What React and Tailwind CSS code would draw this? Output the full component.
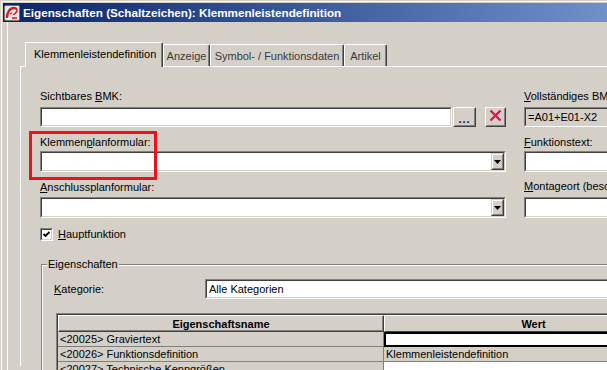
import React from 'react';

const TitleIcon = () => (
  <svg width="16" height="16" viewBox="0 0 16 16" className="ml-px shrink-0">
    <rect x="0.5" y="0.5" width="15" height="15" rx="1.5" fill="#e8e8e8" stroke="#6f6f6f" />
    <path d="M3 13 C3 7 6 3 10 3 C13 3 13.5 6 11 8 C9 9.5 7 9 6.5 8" fill="none" stroke="#d81c24" strokeWidth="2.4" />
    <path d="M4 14 L12 5" stroke="#ffffff" strokeWidth="1.2" />
    <path d="M8 13 L13 13" stroke="#d81c24" strokeWidth="1.6" />
  </svg>
);

// sunken text box (win2k style)
const Field = ({ className = "", inner = "bg-white", children }) => (
  <div className={`${className} border border-t-[#808080] border-l-[#808080] border-r-white border-b-white`}>
    <div className={`h-full flex items-center pl-[2px] whitespace-nowrap border border-t-[#404040] border-l-[#404040] border-r-[#d4d0c8] border-b-[#d4d0c8] ${inner}`}>
      {children}
    </div>
  </div>
);

const Raised = ({ className = "", children }) => (
  <div className={`${className} border border-t-white border-l-white border-r-[#404040] border-b-[#404040] bg-[#d4d0c8]`}>
    <div className="h-full flex items-center justify-center border border-t-[#d4d0c8] border-l-[#d4d0c8] border-r-[#808080] border-b-[#808080]">
      {children}
    </div>
  </div>
);

const Combo = ({ className = "" }) => (
  <div className={`${className} h-[21px] border border-t-[#808080] border-l-[#808080] border-r-white border-b-white`}>
    <div className="h-full flex justify-end bg-white border border-t-[#404040] border-l-[#404040] border-r-[#d4d0c8] border-b-[#d4d0c8]">
      <div className="w-[13px] h-full border border-t-[#d4d0c8] border-l-[#d4d0c8] border-r-[#404040] border-b-[#404040] bg-[#d4d0c8]">
        <div className="h-full flex items-center justify-center border border-t-white border-l-white border-r-[#808080] border-b-[#808080]">
          <svg width="7" height="4" viewBox="0 0 7 4">
            <path d="M0 0 H7 L3.5 4 Z" fill="#000" />
          </svg>
        </div>
      </div>
    </div>
  </div>
);

const tabs = [
  { label: "Anzeige", w: "w-[47px]" },
  { label: "Symbol- / Funktionsdaten", w: "w-[134px]" },
  { label: "Artikel", w: "w-[43px]" },
];

const rows = [
  { name: "<20025> Graviertext", value: "", edit: true },
  { name: "<20026> Funktionsdefinition", value: "Klemmenleistendefinition", gray: true },
  { name: "<20027> Technische Kenngrößen", value: "" },
];

export default function App() {
  return (
    <div className="w-[607px] h-[370px] overflow-hidden bg-[#d4d0c8] pt-[3px] pl-[3px] shadow-[inset_1px_1px_0_#d4d0c8,inset_2px_2px_0_#ffffff] font-['Liberation_Sans',Arial,sans-serif] text-[11px] leading-[14px] text-black">
      {/* title bar */}
      <div className="h-[19px] flex items-center bg-linear-to-r from-[#0a246a] to-[#7090cc]">
        <TitleIcon />
        <span className="ml-[3px] text-white text-[11.7px] font-bold whitespace-nowrap">
          Eigenschaften (Schaltzeichen): Klemmenleistendefinition
        </span>
      </div>

      <div className="ml-[4px] h-[348px] border-l border-white pl-[12px] pt-[20px]">
        {/* tabs */}
        <div className="flex items-end h-[24px] pl-[5px]">
          <div className="relative z-10 -mb-px w-[138px] h-[25px] pt-[4px] pl-[8px] bg-[#d4d0c8] rounded-t-[2px] border-l border-t border-white border-r border-r-[#404040] shadow-[inset_-1px_0_0_#808080] whitespace-nowrap">
            Klemmenleistendefinition
          </div>
          {tabs.map((t) => (
            <div
              key={t.label}
              className={`${t.w} h-[22px] pt-[4px] text-center text-[#3a3a3a] rounded-t-[2px] border-l border-t border-white border-r border-r-[#404040] shadow-[inset_-1px_0_0_#808080] whitespace-nowrap`}
            >
              {t.label}
            </div>
          ))}
        </div>

        {/* tab panel */}
        <div className="relative h-[300px] border-t border-l border-white pl-[19px] pt-[22px]">
          <div className="flex">
            <div className="w-[466px] shrink-0 flex flex-col">
              <div className="whitespace-nowrap">Sichtbares <u>B</u>MK:</div>
              <div className="mt-[4px] flex">
                <Field className="w-[412px] h-[20px]" />
                <Raised className="ml-px w-[23px] h-[20px]">
                  <span className="font-bold tracking-[1px] leading-none pt-[4px]">...</span>
                </Raised>
                <Raised className="ml-[9px] w-[21px] h-[20px]">
                  <svg width="13" height="13" viewBox="0 0 13 13" className="-mt-[3px]">
                    <path d="M1.5 1.5 L11.5 11.5 M11.5 1.5 L1.5 11.5" stroke="#e3144a" strokeWidth="2.4" />
                  </svg>
                </Raised>
              </div>

              <div className="mt-[8px] whitespace-nowrap">Klemmen<u>p</u>lanformular:</div>
              <Combo className="mt-[2px]" />

              <div className="mt-[8px] whitespace-nowrap"><u>A</u>nschlussplanformular:</div>
              <Combo className="mt-[3px]" />

              <div className="mt-[9px] flex items-center">
                <div className="w-[13px] h-[13px] border border-t-[#808080] border-l-[#808080] border-r-white border-b-white">
                  <div className="h-full bg-white border border-t-[#404040] border-l-[#404040] border-r-[#d4d0c8] border-b-[#d4d0c8] flex items-center justify-center">
                    <svg width="7" height="7" viewBox="0 0 7 7">
                      <path d="M0.5 3 L2.5 5 L6.5 1" fill="none" stroke="#000" strokeWidth="1.8" />
                    </svg>
                  </div>
                </div>
                <span className="ml-[5px]"><u>H</u>auptfunktion</span>
              </div>
            </div>

            <div className="ml-[18px] w-[200px] shrink-0 flex flex-col">
              <div className="whitespace-nowrap"><u>V</u>ollständiges BMK:</div>
              <Field className="mt-[4px] h-[20px]" inner="bg-[#d4d0c8]">=A01+E01-X2</Field>
              <div className="mt-[8px] whitespace-nowrap"><u>F</u>unktionstext:</div>
              <Field className="mt-[2px] h-[21px]" />
              <div className="mt-[7px] whitespace-nowrap"><u>M</u>ontageort (besonders):</div>
              <Field className="mt-[4px] h-[21px]" />
            </div>
          </div>

          {/* group box */}
          <fieldset className="mt-[16px] ml-[1px] w-[580px] h-[140px] border border-[#808080] shadow-[inset_1px_1px_0_#ffffff]">
            <legend className="ml-[5px] px-[1px] bg-[#d4d0c8]">Eigenschaften</legend>
            <div className="pl-[12px]">
              <div className="mt-[8px] flex items-center h-[20px]">
                <div className="w-[151px]"><u>K</u>ategorie:</div>
                <Field className="w-[420px] h-[20px]" inner="bg-white">Alle Kategorien</Field>
              </div>

              {/* property table */}
              <div className="mt-[14px] ml-[2px] border-t border-l border-[#808080]">
                <div className="border-t border-l border-[#404040]">
                  <div className="flex h-[17px] font-bold">
                    <div className="w-[326px] border border-t-white border-l-white border-r-[#404040] border-b-[#404040] shadow-[inset_-1px_-1px_0_#808080] flex items-center justify-center">
                      Eigenschaftsname
                    </div>
                    <div className="w-[300px] border border-t-white border-l-white border-r-[#404040] border-b-[#404040] flex items-center">
                      <span className="w-[297px] text-center">Wert</span>
                    </div>
                  </div>
                  {rows.map((r) => (
                    <div key={r.name} className="flex h-[15px]">
                      <div className="w-[326px] pl-[2px] border-r border-b border-[#808080] whitespace-nowrap leading-[14px]">
                        {r.name}
                      </div>
                      {r.edit ? (
                        <div className="w-[300px] bg-white border-2 border-black" />
                      ) : (
                        <div className={`w-[300px] pl-[2px] border-b border-[#808080] whitespace-nowrap leading-[14px] ${r.gray ? "bg-[#d4d0c8]" : "bg-white"}`}>
                          {r.value}
                        </div>
                      )}
                    </div>
                  ))}
                </div>
              </div>
            </div>
          </fieldset>

          {/* red highlight annotation */}
          <div className="absolute left-[8px] top-[64px] w-[128px] h-[49px] border-[3px] border-[#e8141c]" />
        </div>
      </div>
    </div>
  );
}
